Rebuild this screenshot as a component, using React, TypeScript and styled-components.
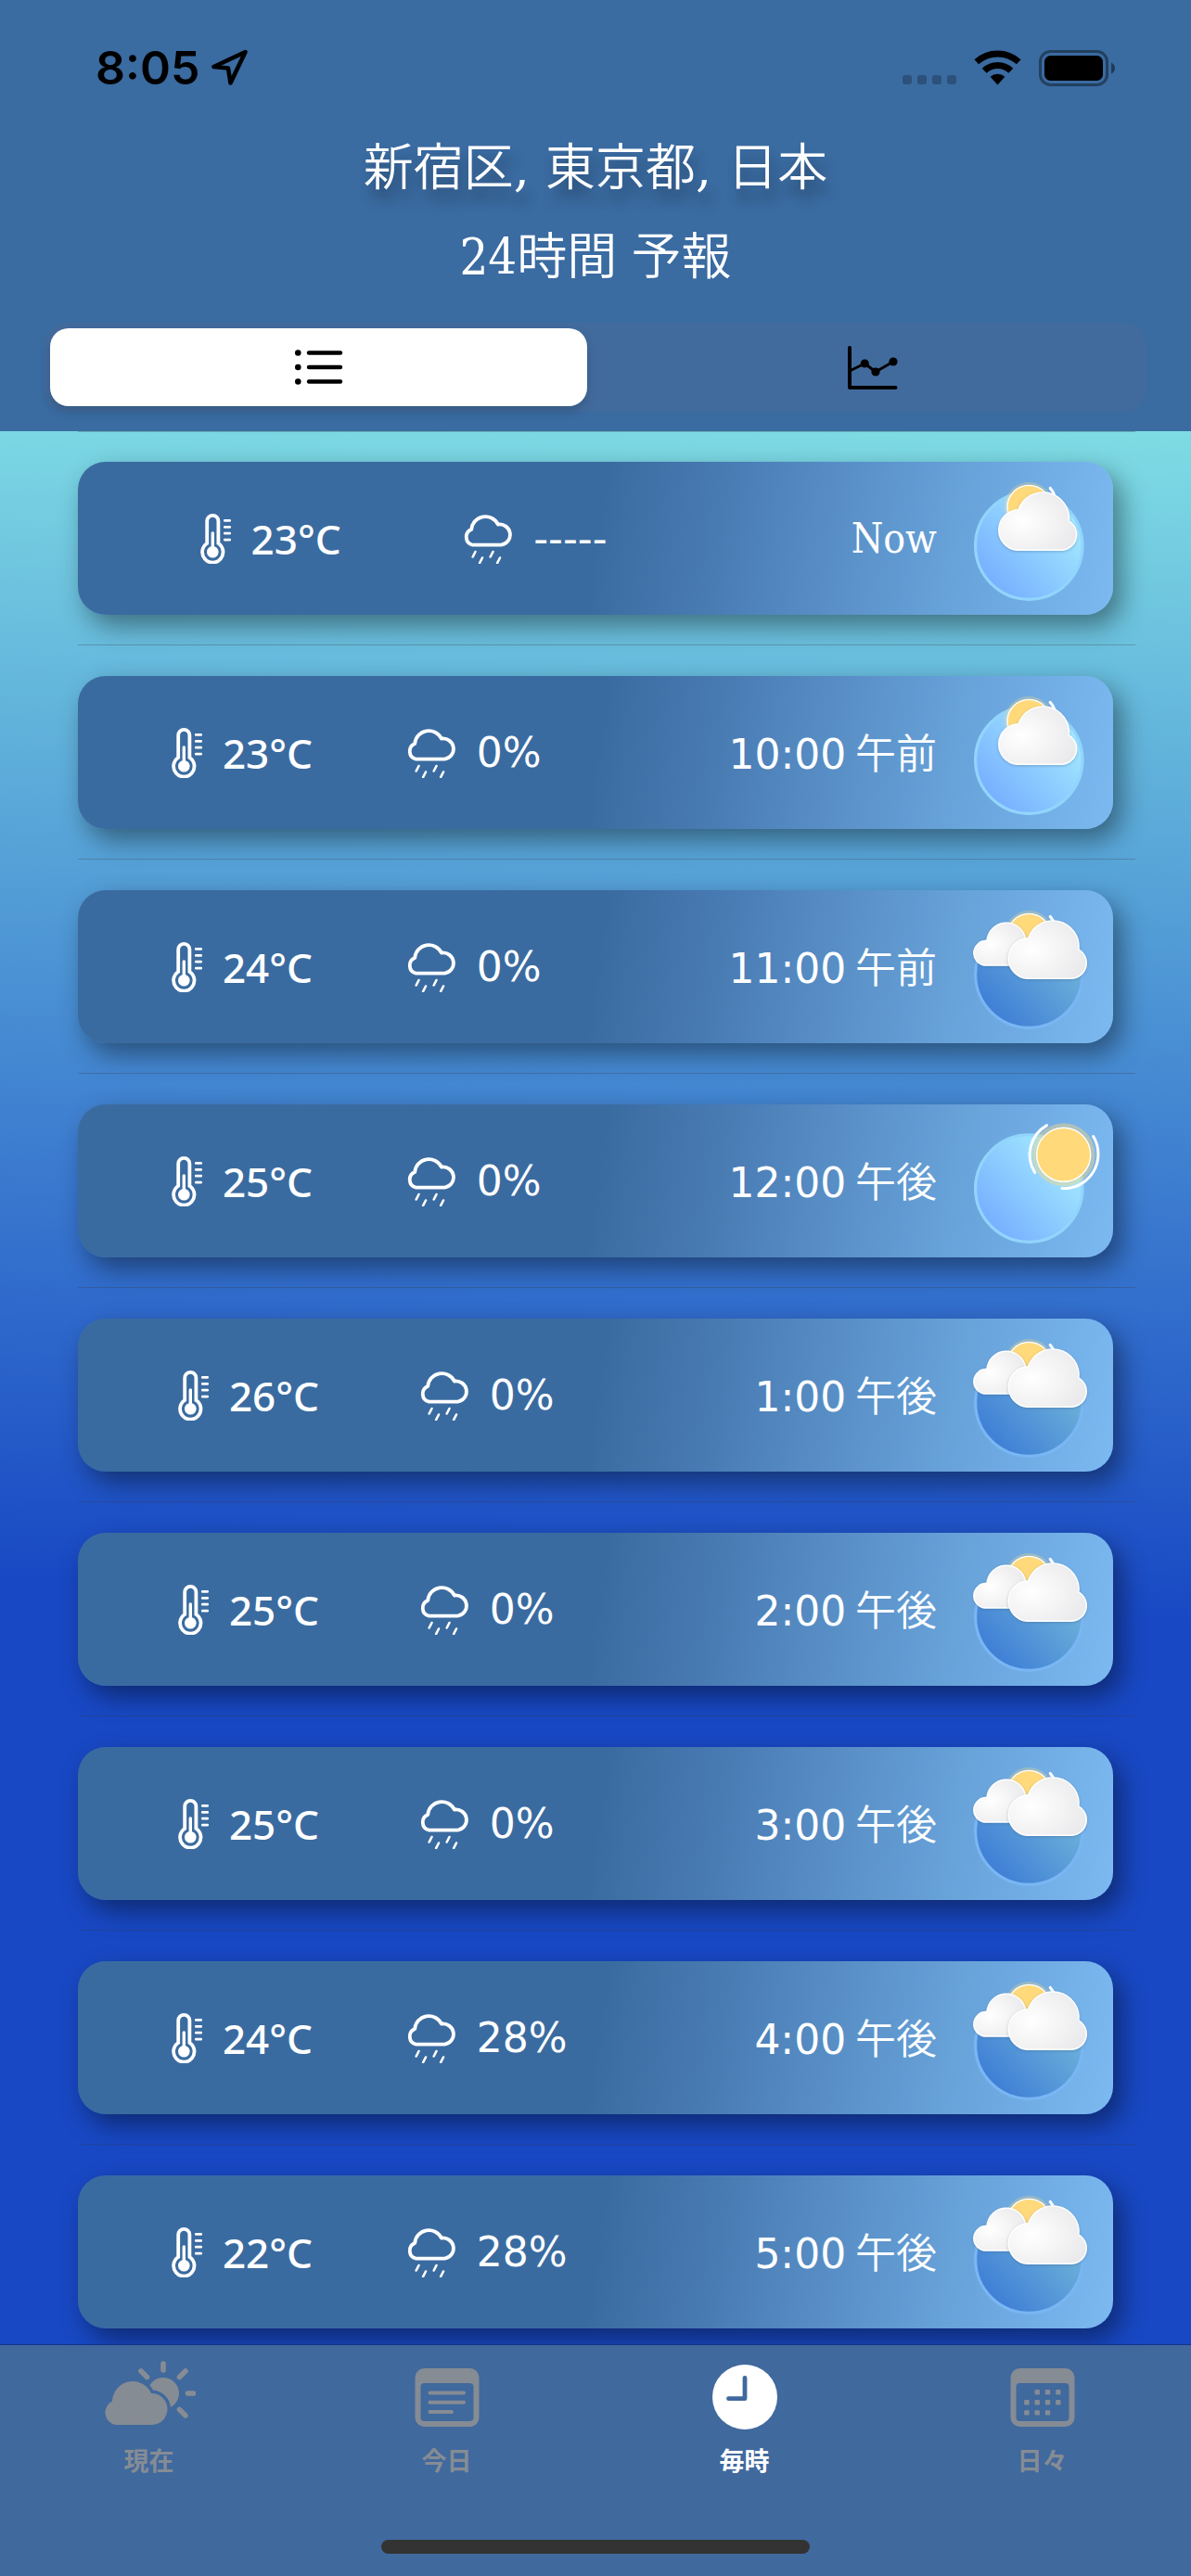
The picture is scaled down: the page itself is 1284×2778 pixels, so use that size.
import React, { useState } from 'react';
import styled, { createGlobalStyle } from 'styled-components';

const GlobalStyle = createGlobalStyle`
  *, *::before, *::after { box-sizing: border-box; }
  html, body { margin: 0; padding: 0; }
  button { font: inherit; color: inherit; background: none; border: 0; padding: 0; cursor: pointer; }
`;

const numerals = '"DejaVu Sans", "Noto Sans CJK JP", sans-serif';
const serif = '"DejaVu Serif Condensed", "DejaVu Serif", "Noto Sans CJK JP", serif';
const wideSerif = '"DejaVu Serif", "Noto Sans CJK JP", serif';

const Screen = styled.div`
  display: flex;
  flex-direction: column;
  height: 100vh;
  overflow: hidden;
  color: #fff;
  font-family: ${numerals};
`;

const Header = styled.header`
  flex: none;
  background: #3a6ba1;
  padding-bottom: 21px;
`;

const StatusBar = styled.div`
  display: flex;
  justify-content: space-between;
  height: 134px;
  padding: 54px 82px 0 103px;
  color: #000;
`;

const StatusGroup = styled.div<{ $gap: number }>`
  display: flex;
  align-items: center;
  gap: ${(p) => p.$gap}px;
  height: 38px;
`;

const Clock = styled.time`
  font: 600 50px/38px Inter, "Liberation Sans", sans-serif;
`;

const Title = styled.h1<{ $place?: boolean }>`
  margin: 0;
  text-align: center;
  font: 350 54px/96px ${(p) => (p.$place ? wideSerif : serif)};
  text-shadow: ${(p) => (p.$place ? '4px 14px 14px rgba(0, 0, 0, 0.3)' : 'none')};
`;

const Segmented = styled.div`
  display: grid;
  grid-template-columns: 1fr 1fr;
  margin: 22px 48px 0;
  padding: 6px;
  gap: 18px;
  height: 96px;
  border-radius: 24px;
  background: #426b9d;
`;

const Segment = styled.button<{ $active: boolean }>`
  display: flex;
  align-items: center;
  justify-content: center;
  border-radius: 20px;
  color: #000;
  background: ${(p) => (p.$active ? '#fff' : 'transparent')};
  box-shadow: ${(p) => (p.$active ? '0 6px 12px rgba(0, 0, 0, 0.16)' : 'none')};
`;

const List = styled.ul`
  flex: 1;
  min-height: 0;
  margin: 0;
  padding: 0;
  list-style: none;
  overflow-y: auto;
  scrollbar-width: none;
  background: linear-gradient(182deg, #7edce4 0%, #4488d2 34%, #1848c4 61%, #1848c4 100%);
`;

const Item = styled.li`
  margin: 0 60px 0 84px;
  padding: 33px 24px 32px 0;
  border-bottom: 1px solid rgba(60, 60, 67, 0.29);

  &:first-child {
    padding-top: 32px;
    border-top: 1px solid rgba(60, 60, 67, 0.29);
  }
`;

const Card = styled.article`
  display: flex;
  align-items: center;
  height: 165px;
  padding-right: 12px;
  border-radius: 30px;
  background: linear-gradient(98deg, #3a6ba0 50%, #4a7cb4 62%, #67a2d9 84%, #7cb9f1 100%);
  box-shadow: 9px 12px 28px rgba(0, 0, 0, 0.42);
  font-size: 44px;
  line-height: 54px;
  white-space: nowrap;
`;

const Spacer = styled.span<{ $grow: number }>`
  flex: ${(p) => p.$grow} 1 0;
`;

const Reading = styled.div`
  display: flex;
  align-items: center;
  gap: 22px;
`;

const Temperature = styled.span`
  font-family: "Noto Sans", sans-serif;
  font-weight: 500;
`;

const Time = styled.time<{ $serif: boolean }>`
  margin-right: 34px;
  font-family: ${(p) => (p.$serif ? serif : numerals)};
`;

const Meridiem = styled.span`
  font-family: "Noto Sans CJK JP", sans-serif;
  font-weight: 350;
`;

const TabBar = styled.nav`
  flex: none;
  height: 250px;
  border-top: 1px solid #12328a;
  background: #40699d;
`;

const Tabs = styled.div`
  display: grid;
  grid-template-columns: repeat(4, 1fr);
  height: 210px;
`;

const Tab = styled.button<{ $active: boolean }>`
  display: flex;
  flex-direction: column;
  align-items: center;
  gap: 13px;
  padding-top: 17px;
  color: ${(p) => (p.$active ? '#fff' : '#868c94')};
  font: 700 27px/36px "Noto Sans CJK JP", sans-serif;
`;

const HomeIndicator = styled.div`
  width: 36%;
  height: 15px;
  margin: 0 auto;
  border-radius: 8px;
  background: #333;
`;

/* ---------- status and header icons ---------- */

const LocationArrow = () => (
  <svg width="42" height="40" viewBox="0 0 42 40" fill="none" stroke="#000" strokeWidth="4.6" strokeLinejoin="round">
    <path d="M37.5 3 L3.5 19 L19 20.5 L21.5 36.5 Z" />
  </svg>
);

const SignalDots = () => (
  <svg width="58" height="38" viewBox="0 0 58 38" fill="#000" fillOpacity="0.24">
    {[0, 16, 32, 48].map((x) => (
      <rect key={x} x={x} y="27" width="10" height="10" rx="3" />
    ))}
  </svg>
);

const Wifi = () => (
  <svg width="51" height="38" viewBox="0 0 51 38" fill="none" stroke="#000" strokeWidth="7">
    <path d="M2.8 12.8 A33.5 33.5 0 0 1 48.2 12.8" />
    <path d="M11.2 22.2 A20.7 20.7 0 0 1 39.8 22.2" />
    <path d="M25.5 37.5 L17.6 28.8 A11.6 11.6 0 0 1 33.4 28.8 Z" fill="#000" stroke="none" />
  </svg>
);

const Battery = () => (
  <svg width="82" height="39" viewBox="0 0 82 39">
    <rect x="1.5" y="1.5" width="72" height="36" rx="11" fill="none" stroke="#000" strokeOpacity="0.4" strokeWidth="3" />
    <rect x="6" y="6" width="63" height="27" rx="6.5" />
    <path d="M78 13.5 Q82 15.5 82 19.5 Q82 23.5 78 25.5 Z" fillOpacity="0.45" />
  </svg>
);

const ListIcon = () => (
  <svg width="52" height="38" viewBox="0 0 52 38" stroke="#000" strokeWidth="4.4" strokeLinecap="round">
    {[3.5, 19, 34.5].map((y) => (
      <g key={y}>
        <circle cx="3.3" cy={y} r="3.3" stroke="none" />
        <path d={`M15 ${y} H49`} />
      </g>
    ))}
  </svg>
);

const ChartIcon = () => (
  <svg width="54" height="48" viewBox="0 0 54 48" fill="none" stroke="#000" strokeWidth="4" strokeLinejoin="round" strokeLinecap="round">
    <path d="M2 3 V46 H51.5" />
    <path d="M2 28 L18.3 20 L30 29 L49 18" strokeWidth="3" />
    <g fill="#000" stroke="none">
      <circle cx="18.3" cy="20" r="4.6" />
      <circle cx="30" cy="29" r="4.6" />
      <circle cx="49" cy="18" r="4.6" />
    </g>
  </svg>
);

/* ---------- row icons ---------- */

const Thermometer = () => (
  <svg width="33" height="54" viewBox="0 0 33 54" fill="none" stroke="#fff" strokeLinecap="round">
    <path d="M7.2 32 V8 A6.1 6.1 0 0 1 19.4 8 V32 A11.2 11.2 0 1 1 7.2 32 Z" strokeWidth="3.8" />
    <circle cx="13.3" cy="41.3" r="6.3" fill="#fff" stroke="none" />
    <path d="M13.3 21 V40" strokeWidth="3.4" />
    <path d="M26.3 7.4 H31.7 M26.3 14.4 H31.7 M26.3 21.2 H31.7 M26.3 28.2 H31.7" strokeWidth="2.8" />
  </svg>
);

const RainCloud = () => (
  <svg width="54" height="54" viewBox="0 0 54 54" fill="none" stroke="#fff" strokeLinecap="round" strokeLinejoin="round">
    <path d="M10.5 33.7 A8.8 8.8 0 0 1 9.2 17 A15.2 15.2 0 0 1 38 11.6 A11 11 0 0 1 41.5 33.7 Z" strokeWidth="3.8" />
    <path d="M13.5 41 L10.7 46.5 M21 47.5 L18.2 53 M32.5 41 L29.7 46.5 M40 47.5 L37.2 53" strokeWidth="2.6" />
  </svg>
);

type Sky = 'partly' | 'cloudy' | 'clear';

const FRONT_CLOUD =
  'M52.5 85.3 A21.8 21.8 0 0 1 54 41.8 A28 28 0 0 1 108.3 54 A16.8 16.8 0 0 1 101 85.3 Z';

const SkyIcon = ({ sky, id }: { sky: Sky; id: string }) => {
  const dark = sky === 'cloudy';
  return (
    <svg width="144" height="145" viewBox="0 0 144 145" role="img" aria-label={sky}>
      <defs>
        <linearGradient id={`${id}-disk`} x1="0.15" y1="0.85" x2="0.85" y2="0.2">
          <stop offset="0" stopColor={dark ? '#3f7fd6' : '#77b0ff'} />
          <stop offset="1" stopColor={dark ? '#70b6da' : '#a2e8ff'} />
        </linearGradient>
        <radialGradient id={`${id}-cloud`} cx="0.3" cy="0.5" r="0.75">
          <stop offset="0" stopColor="#fff" />
          <stop offset="1" stopColor="#e9e9eb" />
        </radialGradient>
        <filter id={`${id}-shade`} x="-20%" y="-20%" width="140%" height="140%">
          <feDropShadow dx="0" dy="1" stdDeviation="1.5" floodColor="#3a5a80" floodOpacity="0.35" />
        </filter>
      </defs>
      <circle cx="65.3" cy="80.6" r="57.7" fill={`url(#${id}-disk)`} stroke={dark ? '#79b6f3' : '#92d5fc'} strokeWidth="3.2" />
      {sky === 'clear' ? (
        <g>
          <circle cx="102.7" cy="44.3" r="34" fill="#ffd97a" fillOpacity="0.42" />
          <circle cx="102.7" cy="44.3" r="29" fill="#ffd97a" stroke="#fff" strokeWidth="1.4" />
          <g fill="none" stroke="#fff" strokeWidth="3" strokeLinecap="round">
            <path d="M84.5 12.6 A36.5 36.5 0 0 0 71.7 63.6" />
            <path d="M134.7 24.6 A37 37 0 0 1 101 80.6" />
          </g>
        </g>
      ) : (
        <g>
          <circle cx="65.3" cy="38.7" r="26.6" fill="#ffd97a" fillOpacity="0.3" />
          <circle cx="65.3" cy="38.7" r="23.3" fill="#ffd97a" stroke="#fff" strokeWidth="1.4" />
          <path d="M88.3 18.5 Q91.5 22 93.5 28" fill="none" stroke="#fff" strokeWidth="3.2" strokeLinecap="round" />
          {dark && (
            <path
              d="M17 71 A13.3 13.3 0 0 1 20 44.6 A21 21 0 0 1 61.5 42 L64 71 Z"
              fill={`url(#${id}-cloud)`}
              stroke="#fff"
              strokeWidth="1.4"
              filter={`url(#${id}-shade)`}
            />
          )}
          <g transform={dark ? 'translate(10.6 0)' : undefined} filter={`url(#${id}-shade)`}>
            <path d={FRONT_CLOUD} fill={`url(#${id}-cloud)`} stroke="#fff" strokeWidth="1.4" />
          </g>
        </g>
      )}
    </svg>
  );
};

/* ---------- tab icons, all on a 100 x 76 canvas ---------- */

const NowIcon = () => (
  <svg width="100" height="76" viewBox="0 0 100 76" fill="currentColor">
    <path
      d="M65 3 V10 M82.5 17.5 L89 11 M91.5 35 H97.5 M82.5 52.5 L89 59 M47.5 17.5 L41 11"
      stroke="currentColor"
      strokeWidth="5.6"
      strokeLinecap="round"
    />
    <circle cx="65" cy="35" r="17" />
    <path
      d="M14 69 A13.5 13.5 0 0 1 10 43.5 A22 22 0 0 1 52 35 A17 17 0 0 1 53 69 Z"
      stroke="#40699d"
      strokeWidth="7"
      paintOrder="stroke"
    />
  </svg>
);

const CalendarBody = () => (
  <path
    fillRule="evenodd"
    d="M25.5 8 H74.5 A10 10 0 0 1 84.5 18 V61 A10 10 0 0 1 74.5 71 H25.5 A10 10 0 0 1 15.5 61 V18 A10 10 0 0 1 25.5 8 Z M25.5 24 A4 4 0 0 0 21.5 28 V61 A4 4 0 0 0 25.5 65 H74.5 A4 4 0 0 0 78.5 61 V28 A4 4 0 0 0 74.5 24 Z"
  />
);

const TodayIcon = () => (
  <svg width="100" height="76" viewBox="0 0 100 76" fill="currentColor">
    <CalendarBody />
    <path d="M31.5 34.5 H68 M31.5 44.7 H68 M31.5 55 H55" stroke="currentColor" strokeWidth="4" strokeLinecap="round" />
  </svg>
);

const ClockIcon = () => (
  <svg width="100" height="76" viewBox="0 0 100 76" fill="currentColor">
    <circle cx="50" cy="39" r="35" />
    <path d="M50 18.3 V40.7 H32.5" fill="none" stroke="#40699d" strokeWidth="4.8" strokeLinecap="round" strokeLinejoin="round" />
  </svg>
);

const DAYS = [
  [1, 0], [2, 0], [3, 0],
  [0, 1], [1, 1], [2, 1], [3, 1],
  [0, 2], [1, 2], [2, 2],
];

const DailyIcon = () => (
  <svg width="100" height="76" viewBox="0 0 100 76" fill="currentColor">
    <CalendarBody />
    {DAYS.map(([c, r]) => (
      <rect key={`${c}-${r}`} x={30.2 + c * 11.3} y={31 + r * 11.1} width="5.4" height="5.4" rx="1.2" />
    ))}
  </svg>
);

/* ---------- data ---------- */

type Hour = { temp: string; rain: string; time: string; half?: string; sky: Sky };

const HOURS: Hour[] = [
  { temp: '23°C', rain: '-----', time: 'Now', sky: 'partly' },
  { temp: '23°C', rain: '0%', time: '10:00', half: '午前', sky: 'partly' },
  { temp: '24°C', rain: '0%', time: '11:00', half: '午前', sky: 'cloudy' },
  { temp: '25°C', rain: '0%', time: '12:00', half: '午後', sky: 'clear' },
  { temp: '26°C', rain: '0%', time: '1:00', half: '午後', sky: 'cloudy' },
  { temp: '25°C', rain: '0%', time: '2:00', half: '午後', sky: 'cloudy' },
  { temp: '25°C', rain: '0%', time: '3:00', half: '午後', sky: 'cloudy' },
  { temp: '24°C', rain: '28%', time: '4:00', half: '午後', sky: 'cloudy' },
  { temp: '22°C', rain: '28%', time: '5:00', half: '午後', sky: 'cloudy' },
];

const TABS = [
  { label: '現在', Icon: NowIcon },
  { label: '今日', Icon: TodayIcon },
  { label: '毎時', Icon: ClockIcon },
  { label: '日々', Icon: DailyIcon },
];

const HourRow = ({ hour, index }: { hour: Hour; index: number }) => (
  <Item>
    <Card>
      <Spacer $grow={1} />
      <Reading>
        <Thermometer />
        <Temperature>{hour.temp}</Temperature>
      </Reading>
      <Spacer $grow={1} />
      <Reading>
        <RainCloud />
        <span>{hour.rain}</span>
      </Reading>
      <Spacer $grow={2} />
      <Time $serif={!hour.half}>
        {hour.time}
        {hour.half && <Meridiem> {hour.half}</Meridiem>}
      </Time>
      <SkyIcon sky={hour.sky} id={`sky${index}`} />
    </Card>
  </Item>
);

export default function App() {
  const [view, setView] = useState<'list' | 'chart'>('list');
  const [tab, setTab] = useState('毎時');

  return (
    <Screen>
      <GlobalStyle />
      <Header>
        <StatusBar>
          <StatusGroup $gap={12}>
            <Clock>8:05</Clock>
            <LocationArrow />
          </StatusGroup>
          <StatusGroup $gap={19}>
            <SignalDots />
            <Wifi />
            <Battery />
          </StatusGroup>
        </StatusBar>
        <Title $place>新宿区, 東京都, 日本</Title>
        <Title as="h2">24時間 予報</Title>
        <Segmented>
          <Segment $active={view === 'list'} aria-label="リスト" aria-pressed={view === 'list'} onClick={() => setView('list')}>
            <ListIcon />
          </Segment>
          <Segment $active={view === 'chart'} aria-label="グラフ" aria-pressed={view === 'chart'} onClick={() => setView('chart')}>
            <ChartIcon />
          </Segment>
        </Segmented>
      </Header>
      <List>
        {HOURS.map((hour, i) => (
          <HourRow key={hour.time} hour={hour} index={i} />
        ))}
      </List>
      <TabBar>
        <Tabs>
          {TABS.map(({ label, Icon }) => (
            <Tab key={label} $active={tab === label} onClick={() => setTab(label)}>
              <Icon />
              <span>{label}</span>
            </Tab>
          ))}
        </Tabs>
        <HomeIndicator />
      </TabBar>
    </Screen>
  );
}
